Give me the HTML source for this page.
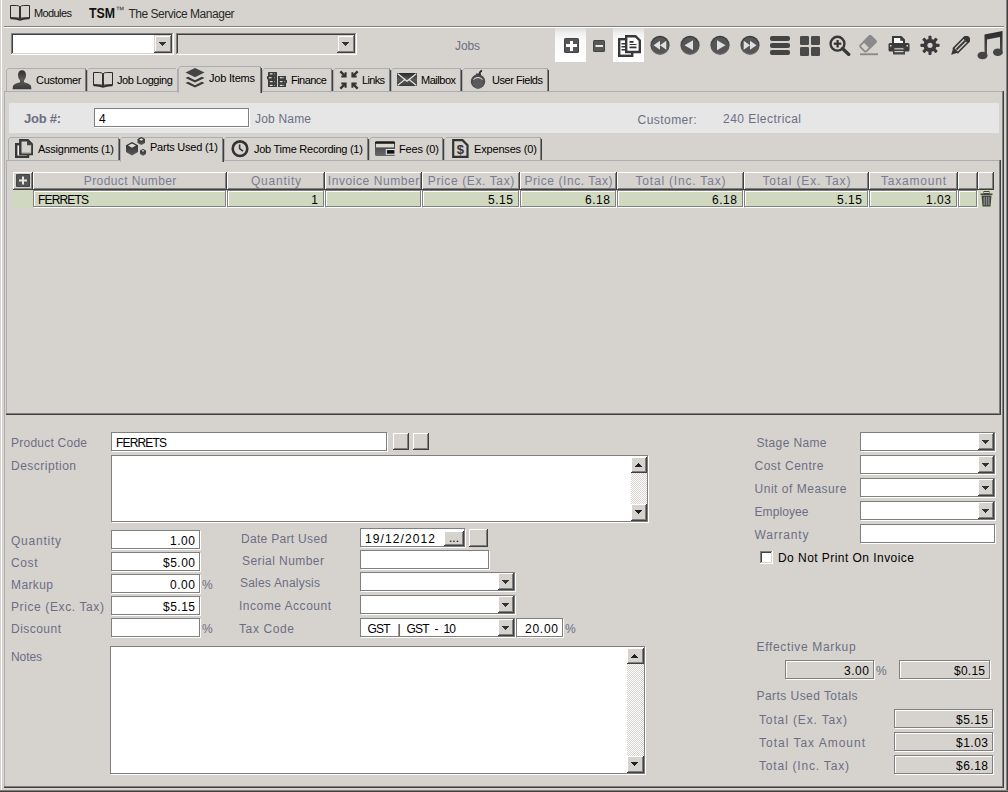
<!DOCTYPE html>
<html><head><meta charset="utf-8">
<style>
*{margin:0;padding:0;box-sizing:border-box}
html,body{width:1008px;height:792px;overflow:hidden;background:#d6d3ce}
body{position:relative;font-family:"Liberation Sans",sans-serif;font-size:12px;color:#000}
.a{position:absolute}
.t{position:absolute;white-space:nowrap}
</style></head><body>
<div class="a" style="left:1px;top:0px;width:1px;height:792px;background:#fff"></div>
<div class="a" style="left:1006px;top:0px;width:1px;height:792px;background:#808080"></div>
<div class="a" style="left:1007px;top:0px;width:1px;height:792px;background:#404040"></div>
<div class="a" style="left:0px;top:790px;width:1008px;height:1px;background:#808080"></div>
<div class="a" style="left:0px;top:791px;width:1008px;height:1px;background:#404040"></div>
<div class="a" style="left:4px;top:26px;width:1000px;height:1px;background:#808080"></div>
<div class="a" style="left:4px;top:27px;width:1000px;height:1px;background:#fff"></div>
<svg class="a" style="left:10px;top:5px;" width="20" height="16" viewBox="0 0 20 16"><path d="M0.5 0.5H6.5Q9 0.5 10 2Q11 0.5 13.5 0.5H19.5V13H0.5Z" fill="none" stroke="#2b2b2b" stroke-width="1"/>
<path d="M0.5 12.3Q6 12 10 14Q14 12 19.5 12.3V14.3Q14 14 10 15.8Q6 14 0.5 14.3Z" fill="#2b2b2b"/>
<rect x="9" y="2" width="2" height="13" fill="#333"/></svg>
<div class="t" style="left:34.0px;top:8px;font-size:11px;line-height:11px;color:#111;letter-spacing:-0.60px;">Modules</div>
<div class="t" style="left:88.5px;top:6px;font-size:14px;line-height:14px;color:#111;font-weight:bold;transform:scaleX(0.880);transform-origin:0 0;">TSM</div>
<div class="t" style="left:115.5px;top:6px;font-size:9px;line-height:9px;color:#333;">™</div>
<div class="t" style="left:128.5px;top:8px;font-size:12px;line-height:12px;color:#2a2a2a;letter-spacing:-0.48px;">The Service Manager</div>
<div class="a" style="left:11px;top:33px;width:163px;height:22px;background:#fff;box-shadow:inset -1px -1px #fff, inset 1px 1px #808080, inset -2px -2px #d6d3ce, inset 2px 2px #404040"></div>
<div class="a" style="left:154px;top:35px;width:18px;height:18px;background:#d6d3ce;box-shadow:inset -1px -1px #404040, inset 1px 1px #d6d3ce, inset -2px -2px #808080, inset 2px 2px #fff"></div>
<svg class="a" style="left:159px;top:42px" width="7" height="4" shape-rendering="crispEdges"><path d="M0 0h7v1h-7zM1 1h5v1h-5zM2 2h3v1h-3zM3 3h1v1h-1z" fill="#333"/></svg>
<div class="a" style="left:176px;top:33px;width:181px;height:22px;background:#d6d3ce;box-shadow:inset -1px -1px #fff, inset 1px 1px #808080, inset -2px -2px #d6d3ce, inset 2px 2px #404040"></div>
<div class="a" style="left:337px;top:35px;width:18px;height:18px;background:#d6d3ce;box-shadow:inset -1px -1px #404040, inset 1px 1px #d6d3ce, inset -2px -2px #808080, inset 2px 2px #fff"></div>
<svg class="a" style="left:342px;top:42px" width="7" height="4" shape-rendering="crispEdges"><path d="M0 0h7v1h-7zM1 1h5v1h-5zM2 2h3v1h-3zM3 3h1v1h-1z" fill="#333"/></svg>
<div class="t" style="left:455.0px;top:40px;font-size:12px;line-height:12px;color:#6c6e84;letter-spacing:-0.11px;">Jobs</div>
<div class="a" style="left:6px;top:70px;width:1px;height:22px;background:#adadb4"></div>
<div class="a" style="left:7px;top:69px;width:1px;height:1px;background:#adadb4"></div>
<div class="a" style="left:8px;top:68px;width:77px;height:1px;background:#adadb4"></div>
<div class="a" style="left:85px;top:69px;width:1px;height:23px;background:#808080"></div>
<div class="a" style="left:86px;top:70px;width:1px;height:22px;background:#404040"></div>
<div class="a" style="left:85px;top:68px;width:1px;height:1px;background:#adadb4"></div>
<div class="a" style="left:87px;top:70px;width:1px;height:22px;background:#adadb4"></div>
<div class="a" style="left:88px;top:69px;width:1px;height:1px;background:#adadb4"></div>
<div class="a" style="left:89px;top:68px;width:87px;height:1px;background:#adadb4"></div>
<div class="a" style="left:177px;top:69px;width:1px;height:23px;background:#adadb4"></div>
<div class="a" style="left:262px;top:70px;width:1px;height:22px;background:#adadb4"></div>
<div class="a" style="left:263px;top:69px;width:1px;height:1px;background:#adadb4"></div>
<div class="a" style="left:264px;top:68px;width:67px;height:1px;background:#adadb4"></div>
<div class="a" style="left:331px;top:69px;width:1px;height:23px;background:#808080"></div>
<div class="a" style="left:332px;top:70px;width:1px;height:22px;background:#404040"></div>
<div class="a" style="left:331px;top:68px;width:1px;height:1px;background:#adadb4"></div>
<div class="a" style="left:333px;top:70px;width:1px;height:22px;background:#adadb4"></div>
<div class="a" style="left:334px;top:69px;width:1px;height:1px;background:#adadb4"></div>
<div class="a" style="left:335px;top:68px;width:54px;height:1px;background:#adadb4"></div>
<div class="a" style="left:389px;top:69px;width:1px;height:23px;background:#808080"></div>
<div class="a" style="left:390px;top:70px;width:1px;height:22px;background:#404040"></div>
<div class="a" style="left:389px;top:68px;width:1px;height:1px;background:#adadb4"></div>
<div class="a" style="left:391px;top:70px;width:1px;height:22px;background:#adadb4"></div>
<div class="a" style="left:392px;top:69px;width:1px;height:1px;background:#adadb4"></div>
<div class="a" style="left:393px;top:68px;width:67px;height:1px;background:#adadb4"></div>
<div class="a" style="left:460px;top:69px;width:1px;height:23px;background:#808080"></div>
<div class="a" style="left:461px;top:70px;width:1px;height:22px;background:#404040"></div>
<div class="a" style="left:460px;top:68px;width:1px;height:1px;background:#adadb4"></div>
<div class="a" style="left:462px;top:70px;width:1px;height:22px;background:#adadb4"></div>
<div class="a" style="left:463px;top:69px;width:1px;height:1px;background:#adadb4"></div>
<div class="a" style="left:464px;top:68px;width:83px;height:1px;background:#adadb4"></div>
<div class="a" style="left:547px;top:69px;width:1px;height:23px;background:#808080"></div>
<div class="a" style="left:548px;top:70px;width:1px;height:22px;background:#404040"></div>
<div class="a" style="left:547px;top:68px;width:1px;height:1px;background:#adadb4"></div>
<div class="a" style="left:4px;top:91px;width:174px;height:1px;background:#adadb4"></div>
<div class="a" style="left:261px;top:91px;width:742px;height:1px;background:#adadb4"></div>
<div class="a" style="left:4px;top:91px;width:1px;height:697px;background:#adadb4"></div>
<div class="a" style="left:1002px;top:91px;width:1px;height:696px;background:#808080"></div>
<div class="a" style="left:1003px;top:91px;width:1px;height:697px;background:#404040"></div>
<div class="a" style="left:4px;top:786px;width:999px;height:1px;background:#808080"></div>
<div class="a" style="left:4px;top:787px;width:1000px;height:1px;background:#404040"></div>
<div class="a" style="left:178px;top:68px;width:1px;height:25px;background:#adadb4"></div>
<div class="a" style="left:179px;top:67px;width:1px;height:1px;background:#adadb4"></div>
<div class="a" style="left:180px;top:66px;width:80px;height:1px;background:#adadb4"></div>
<div class="a" style="left:260px;top:67px;width:1px;height:26px;background:#808080"></div>
<div class="a" style="left:261px;top:68px;width:1px;height:25px;background:#404040"></div>
<div class="a" style="left:260px;top:66px;width:1px;height:1px;background:#adadb4"></div>
<div class="t" style="left:36.0px;top:75px;font-size:11px;line-height:11px;color:#000;letter-spacing:-0.31px;">Customer</div>
<div class="t" style="left:117.0px;top:75px;font-size:11px;line-height:11px;color:#000;letter-spacing:-0.40px;">Job Logging</div>
<div class="t" style="left:209.0px;top:73px;font-size:11px;line-height:11px;color:#000;letter-spacing:-0.21px;">Job Items</div>
<div class="t" style="left:291.0px;top:75px;font-size:11px;line-height:11px;color:#000;letter-spacing:-0.53px;">Finance</div>
<div class="t" style="left:362.0px;top:75px;font-size:11px;line-height:11px;color:#000;letter-spacing:-0.67px;">Links</div>
<div class="t" style="left:421.0px;top:75px;font-size:11px;line-height:11px;color:#000;letter-spacing:-0.48px;">Mailbox</div>
<div class="t" style="left:492.0px;top:75px;font-size:11px;line-height:11px;color:#000;letter-spacing:-0.46px;">User Fields</div>
<div class="a" style="left:9px;top:103px;width:990px;height:30px;background:#e6e6e6"></div>
<div class="t" style="left:24.0px;top:112px;font-size:13px;line-height:13px;color:#6c6e84;letter-spacing:-0.26px;font-weight:bold;">Job #:</div>
<div class="a" style="left:94px;top:108px;width:155px;height:19px;background:#fff;border:1px solid #7f7f7f;box-shadow:1px 1px 0 #fff"></div>
<div class="t" style="left:99.0px;top:113px;font-size:12px;line-height:12px;color:#000;">4</div>
<div class="t" style="left:255.0px;top:113px;font-size:12px;line-height:12px;color:#6c6e84;letter-spacing:0.19px;">Job Name</div>
<div class="t" style="left:637.5px;top:114px;font-size:12px;line-height:12px;color:#6c6e84;letter-spacing:0.46px;">Customer:</div>
<div class="t" style="left:723.0px;top:113px;font-size:12px;line-height:12px;color:#6c6e84;letter-spacing:0.46px;">240 Electrical</div>
<div class="a" style="left:8px;top:139px;width:1px;height:22px;background:#adadb4"></div>
<div class="a" style="left:9px;top:138px;width:1px;height:1px;background:#adadb4"></div>
<div class="a" style="left:10px;top:137px;width:108px;height:1px;background:#adadb4"></div>
<div class="a" style="left:118px;top:138px;width:1px;height:23px;background:#808080"></div>
<div class="a" style="left:119px;top:139px;width:1px;height:22px;background:#404040"></div>
<div class="a" style="left:118px;top:137px;width:1px;height:1px;background:#adadb4"></div>
<div class="a" style="left:224px;top:139px;width:1px;height:22px;background:#adadb4"></div>
<div class="a" style="left:225px;top:138px;width:1px;height:1px;background:#adadb4"></div>
<div class="a" style="left:226px;top:137px;width:141px;height:1px;background:#adadb4"></div>
<div class="a" style="left:367px;top:138px;width:1px;height:23px;background:#808080"></div>
<div class="a" style="left:368px;top:139px;width:1px;height:22px;background:#404040"></div>
<div class="a" style="left:367px;top:137px;width:1px;height:1px;background:#adadb4"></div>
<div class="a" style="left:369px;top:139px;width:1px;height:22px;background:#adadb4"></div>
<div class="a" style="left:370px;top:138px;width:1px;height:1px;background:#adadb4"></div>
<div class="a" style="left:371px;top:137px;width:71px;height:1px;background:#adadb4"></div>
<div class="a" style="left:442px;top:138px;width:1px;height:23px;background:#808080"></div>
<div class="a" style="left:443px;top:139px;width:1px;height:22px;background:#404040"></div>
<div class="a" style="left:442px;top:137px;width:1px;height:1px;background:#adadb4"></div>
<div class="a" style="left:444px;top:139px;width:1px;height:22px;background:#adadb4"></div>
<div class="a" style="left:445px;top:138px;width:1px;height:1px;background:#adadb4"></div>
<div class="a" style="left:446px;top:137px;width:94px;height:1px;background:#adadb4"></div>
<div class="a" style="left:540px;top:138px;width:1px;height:23px;background:#808080"></div>
<div class="a" style="left:541px;top:139px;width:1px;height:22px;background:#404040"></div>
<div class="a" style="left:540px;top:137px;width:1px;height:1px;background:#adadb4"></div>
<div class="a" style="left:6px;top:160px;width:114px;height:1px;background:#adadb4"></div>
<div class="a" style="left:223px;top:160px;width:778px;height:1px;background:#adadb4"></div>
<div class="a" style="left:6px;top:160px;width:1px;height:255px;background:#adadb4"></div>
<div class="a" style="left:999px;top:160px;width:1px;height:254px;background:#808080"></div>
<div class="a" style="left:1000px;top:160px;width:1px;height:255px;background:#404040"></div>
<div class="a" style="left:6px;top:413px;width:994px;height:1px;background:#808080"></div>
<div class="a" style="left:6px;top:414px;width:995px;height:1px;background:#404040"></div>
<div class="a" style="left:120px;top:139px;width:1px;height:23px;background:#adadb4"></div>
<div class="a" style="left:121px;top:138px;width:1px;height:1px;background:#adadb4"></div>
<div class="a" style="left:122px;top:137px;width:100px;height:1px;background:#adadb4"></div>
<div class="a" style="left:222px;top:138px;width:1px;height:24px;background:#808080"></div>
<div class="a" style="left:223px;top:139px;width:1px;height:23px;background:#404040"></div>
<div class="a" style="left:222px;top:137px;width:1px;height:1px;background:#adadb4"></div>
<div class="t" style="left:38.0px;top:144px;font-size:11px;line-height:11px;color:#000;letter-spacing:-0.25px;">Assignments (1)</div>
<div class="t" style="left:150.0px;top:142px;font-size:11px;line-height:11px;color:#000;letter-spacing:-0.23px;">Parts Used (1)</div>
<div class="t" style="left:254.0px;top:144px;font-size:11px;line-height:11px;color:#000;letter-spacing:-0.26px;">Job Time Recording (1)</div>
<div class="t" style="left:399.0px;top:144px;font-size:11px;line-height:11px;color:#000;letter-spacing:-0.14px;">Fees (0)</div>
<div class="t" style="left:474.0px;top:144px;font-size:11px;line-height:11px;color:#000;letter-spacing:-0.17px;">Expenses (0)</div>
<svg class="a" style="left:12px;top:70px;" width="20" height="20" viewBox="0 0 20 20"><defs><linearGradient id="pg" x1="0" y1="0" x2="0" y2="1"><stop offset="0" stop-color="#2e2e2e"/><stop offset="0.5" stop-color="#5a5a5a"/><stop offset="1" stop-color="#3a3a3a"/></linearGradient></defs>
<path d="M10 0.3C7.6 0.3 6 2.2 6 5C6 7.5 7 9.3 8 10.3V12.3Q2.5 13.6 1 15.8L0.6 19.3H19.4L19 15.8Q17.5 13.6 12 12.3V10.3C13 9.3 14 7.5 14 5C14 2.2 12.4 0.3 10 0.3Z" fill="url(#pg)"/></svg>
<svg class="a" style="left:93px;top:72px;" width="20" height="16" viewBox="0 0 20 16"><path d="M0.5 0.5H6.5Q9 0.5 10 2Q11 0.5 13.5 0.5H19.5V13H0.5Z" fill="none" stroke="#2b2b2b" stroke-width="1"/>
<path d="M0.5 12.3Q6 12 10 14Q14 12 19.5 12.3V14.3Q14 14 10 15.8Q6 14 0.5 14.3Z" fill="#2b2b2b"/>
<rect x="9" y="2" width="2" height="13" fill="#333"/></svg>
<svg class="a" style="left:185px;top:67px;" width="20" height="21" viewBox="0 0 20 21"><path d="M0.5 5.6L10 1L19.5 5.6L10 10.2Z" fill="#444"/>
<path d="M0.5 11L3.2 9.7L10 13.2L16.8 9.7L19.5 11L10 15.6Z" fill="#3a3a3a"/>
<path d="M0.5 16L3.2 14.7L10 18.2L16.8 14.7L19.5 16L10 20.6Z" fill="#3a3a3a"/></svg>
<svg class="a" style="left:267px;top:72px;" width="20" height="15" viewBox="0 0 20 15"><rect x="1" y="0.5" width="9" height="14.3" fill="#4a4a4a"/><rect x="11" y="4.2" width="8" height="10.6" fill="#4a4a4a"/><rect x="1" y="0" width="9" height="3.6" rx="0.8" fill="#3a3a3a"/><rect x="2.8" y="1.3" width="2.8" height="1.1" fill="#f0f0f0"/><rect x="7" y="1.3" width="1.2" height="1.1" fill="#9a9a9a"/><rect x="0" y="3.9" width="10" height="3.6" rx="0.8" fill="#3a3a3a"/><rect x="1.8" y="5.2" width="2.8" height="1.1" fill="#f0f0f0"/><rect x="7" y="5.2" width="1.2" height="1.1" fill="#9a9a9a"/><rect x="1" y="7.8" width="9" height="3.4" rx="0.8" fill="#3a3a3a"/><rect x="2.8" y="9.1" width="2.8" height="1.1" fill="#f0f0f0"/><rect x="7" y="9.1" width="1.2" height="1.1" fill="#9a9a9a"/><rect x="1" y="11.5" width="9" height="3.5" rx="0.8" fill="#3a3a3a"/><rect x="2.8" y="12.8" width="2.8" height="1.1" fill="#f0f0f0"/><rect x="7" y="12.8" width="1.2" height="1.1" fill="#9a9a9a"/><rect x="11" y="3.9" width="8" height="3.6" rx="0.8" fill="#3a3a3a"/><rect x="12.8" y="5.2" width="2.8" height="1.1" fill="#f0f0f0"/><rect x="16" y="5.2" width="1.2" height="1.1" fill="#9a9a9a"/><rect x="11" y="7.8" width="9" height="3.4" rx="0.8" fill="#3a3a3a"/><rect x="12.8" y="9.1" width="2.8" height="1.1" fill="#f0f0f0"/><rect x="17" y="9.1" width="1.2" height="1.1" fill="#9a9a9a"/><rect x="11" y="11.5" width="8" height="3.5" rx="0.8" fill="#3a3a3a"/><rect x="12.8" y="12.8" width="2.8" height="1.1" fill="#f0f0f0"/><rect x="16" y="12.8" width="1.2" height="1.1" fill="#9a9a9a"/></svg>
<svg class="a" style="left:339px;top:70px;" width="20" height="20" viewBox="0 0 20 20"><g fill="#333"><path d="M0.5 2.2L2.2 0.5L5.6 3.9L5.6 2.3L7.6 2.3L7.6 7.6L2.3 7.6L2.3 5.6L3.9 5.6Z"/>
<path transform="translate(20 0) scale(-1 1)" d="M0.5 2.2L2.2 0.5L5.6 3.9L5.6 2.3L7.6 2.3L7.6 7.6L2.3 7.6L2.3 5.6L3.9 5.6Z"/>
<path transform="translate(0 20) scale(1 -1)" d="M0.5 2.2L2.2 0.5L5.6 3.9L5.6 2.3L7.6 2.3L7.6 7.6L2.3 7.6L2.3 5.6L3.9 5.6Z"/>
<path transform="translate(20 20) scale(-1 -1)" d="M0.5 2.2L2.2 0.5L5.6 3.9L5.6 2.3L7.6 2.3L7.6 7.6L2.3 7.6L2.3 5.6L3.9 5.6Z"/></g></svg>
<svg class="a" style="left:397px;top:73px;" width="20" height="13" viewBox="0 0 20 13"><defs><linearGradient id="eg" x1="0" y1="0" x2="0" y2="1"><stop offset="0" stop-color="#2a2a2a"/><stop offset="0.5" stop-color="#5a5a5a"/><stop offset="1" stop-color="#3a3a3a"/></linearGradient></defs>
<rect x="0" y="0" width="20" height="13" rx="0.8" fill="url(#eg)"/>
<path d="M0.8 0.8L10 8.3L19.2 0.8M0.8 12.2L7.8 6.6M19.2 12.2L12.2 6.6" stroke="#eeeae6" stroke-width="1.2" fill="none"/></svg>
<svg class="a" style="left:470px;top:69px;" width="16" height="21" viewBox="0 0 16 21"><path d="M9.5 5.5Q9.5 2.5 12 1.5" stroke="#222" stroke-width="1.6" fill="none"/>
<rect x="6" y="4.5" width="5" height="3" fill="#3a3a3a"/>
<circle cx="8" cy="12.5" r="7.2" fill="#4a4a4a"/>
<circle cx="8" cy="14" r="5.5" fill="#5a5a5a"/>
<path d="M3.5 10.5Q8 6.5 12.5 10.5" stroke="#eee" stroke-width="1" fill="none"/></svg>
<svg class="a" style="left:15px;top:139px;" width="18" height="19" viewBox="0 0 18 19"><rect x="1.2" y="5.2" width="11.8" height="12.6" fill="#f4f4f4" stroke="#383838" stroke-width="2.4"/>
<path d="M5.3 1.2H12.8L17 5.4V15H5.3Z" fill="#d6d3ce" stroke="#383838" stroke-width="2.4"/>
<path d="M12 1V6.2H17.2Z" fill="#444"/>
<path d="M6.5 14.3H15.8V5.8" fill="none" stroke="#f4f4f4" stroke-width="0.8" opacity="0.6"/></svg>
<svg class="a" style="left:126px;top:137px;" width="21" height="19" viewBox="0 0 21 19"><defs><linearGradient id="cg" x1="0" y1="0" x2="0" y2="1"><stop offset="0" stop-color="#2a2a2a"/><stop offset="1" stop-color="#5a5a5a"/></linearGradient></defs>
<path d="M6 5L12 8.3V15L6 18.5L0 15V8.3Z" fill="url(#cg)"/>
<path d="M6 6.6L10 8.6L6 10.8L2 8.6Z" fill="#e0dcd8"/>
<path d="M15.3 0L19 2V6L15.3 8L11.5 6V2Z" fill="url(#cg)"/>
<path d="M15.3 1.3L17.5 2.4L15.3 3.7L13.1 2.4Z" fill="#e0dcd8"/>
<path d="M17 12L20 13.6V17L17 18.7L14 17V13.6Z" fill="url(#cg)"/>
<path d="M17 13L18.6 13.8L17 14.8L15.4 13.8Z" fill="#e0dcd8"/></svg>
<svg class="a" style="left:231px;top:140px;" width="18" height="18" viewBox="0 0 18 18"><circle cx="9" cy="8.7" r="7.3" fill="none" stroke="#333" stroke-width="2.6"/>
<path d="M8.6 4.5V8.6L12 11.2" fill="none" stroke="#333" stroke-width="1.5"/></svg>
<svg class="a" style="left:375px;top:141px;" width="20" height="15" viewBox="0 0 20 15"><defs><linearGradient id="fg" x1="0" y1="0" x2="0" y2="1"><stop offset="0" stop-color="#3a3a3a"/><stop offset="1" stop-color="#6a6a6a"/></linearGradient></defs>
<rect x="0" y="0.5" width="20" height="14.5" rx="1.5" fill="url(#fg)"/>
<rect x="0" y="0.5" width="20" height="2.2" rx="1" fill="#181818"/>
<rect x="1" y="2.8" width="18" height="3.6" fill="#dcd8d2"/>
<rect x="11.3" y="8.6" width="8.7" height="4.6" fill="#111" stroke="#f4f4f4" stroke-width="1"/></svg>
<svg class="a" style="left:452px;top:139px;" width="17" height="19" viewBox="0 0 17 19"><path d="M1.2 1.2H10.5L15.5 6.2V17.8H1.2Z" fill="#d6d3ce" stroke="#333" stroke-width="2.2"/>
<text x="8.3" y="15" font-family="Liberation Sans" font-weight="bold" font-size="13" text-anchor="middle" fill="#333">$</text></svg>
<div class="a" style="left:13px;top:172px;width:20px;height:18px;background:#d6d3ce;box-shadow:inset -1px -1px #404040, inset 1px 1px #fff, inset -2px -2px #808080"></div>
<div class="a" style="left:33px;top:172px;width:194px;height:18px;background:#d6d3ce;box-shadow:inset -1px -1px #404040, inset 1px 1px #fff, inset -2px -2px #808080"></div>
<div class="a" style="left:227px;top:172px;width:98px;height:18px;background:#d6d3ce;box-shadow:inset -1px -1px #404040, inset 1px 1px #fff, inset -2px -2px #808080"></div>
<div class="a" style="left:325px;top:172px;width:97px;height:18px;background:#d6d3ce;box-shadow:inset -1px -1px #404040, inset 1px 1px #fff, inset -2px -2px #808080"></div>
<div class="a" style="left:422px;top:172px;width:98px;height:18px;background:#d6d3ce;box-shadow:inset -1px -1px #404040, inset 1px 1px #fff, inset -2px -2px #808080"></div>
<div class="a" style="left:520px;top:172px;width:97px;height:18px;background:#d6d3ce;box-shadow:inset -1px -1px #404040, inset 1px 1px #fff, inset -2px -2px #808080"></div>
<div class="a" style="left:617px;top:172px;width:127px;height:18px;background:#d6d3ce;box-shadow:inset -1px -1px #404040, inset 1px 1px #fff, inset -2px -2px #808080"></div>
<div class="a" style="left:744px;top:172px;width:125px;height:18px;background:#d6d3ce;box-shadow:inset -1px -1px #404040, inset 1px 1px #fff, inset -2px -2px #808080"></div>
<div class="a" style="left:869px;top:172px;width:89px;height:18px;background:#d6d3ce;box-shadow:inset -1px -1px #404040, inset 1px 1px #fff, inset -2px -2px #808080"></div>
<div class="a" style="left:958px;top:172px;width:20px;height:18px;background:#d6d3ce;box-shadow:inset -1px -1px #404040, inset 1px 1px #fff, inset -2px -2px #808080"></div>
<div class="a" style="left:978px;top:172px;width:16px;height:18px;background:#d6d3ce;box-shadow:inset -1px -1px #404040, inset 1px 1px #fff, inset -2px -2px #808080"></div>
<svg class="a" style="left:16px;top:174px;" width="14" height="13" viewBox="0 0 14 13"><rect x="0" y="0" width="14" height="13" rx="1" fill="#444"/><rect x="1" y="1" width="12" height="11" fill="#555"/>
<rect x="6" y="2.5" width="2" height="8" fill="#e6e6e6"/><rect x="3" y="5.5" width="8" height="2" fill="#e6e6e6"/></svg>
<div class="t" style="left:83.8px;top:175px;font-size:12px;line-height:12px;color:#7a7c92;letter-spacing:0.40px;">Product Number</div>
<div class="t" style="left:251.0px;top:175px;font-size:12px;line-height:12px;color:#7a7c92;letter-spacing:0.76px;">Quantity</div>
<div class="t" style="left:327.8px;top:175px;font-size:12px;line-height:12px;color:#7a7c92;letter-spacing:0.57px;">Invoice Number</div>
<div class="t" style="left:427.8px;top:175px;font-size:12px;line-height:12px;color:#7a7c92;letter-spacing:0.62px;">Price (Ex. Tax)</div>
<div class="t" style="left:524.5px;top:175px;font-size:12px;line-height:12px;color:#7a7c92;letter-spacing:0.55px;">Price (Inc. Tax)</div>
<div class="t" style="left:635.5px;top:175px;font-size:12px;line-height:12px;color:#7a7c92;letter-spacing:0.81px;">Total (Inc. Tax)</div>
<div class="t" style="left:762.5px;top:175px;font-size:12px;line-height:12px;color:#7a7c92;letter-spacing:0.87px;">Total (Ex. Tax)</div>
<div class="t" style="left:881.0px;top:175px;font-size:12px;line-height:12px;color:#7a7c92;letter-spacing:0.79px;">Taxamount</div>
<div class="a" style="left:13px;top:190px;width:20px;height:18px;background:#d0d8c0"></div>
<div class="a" style="left:33px;top:190px;width:193px;height:17px;background:#d0d8c0;border-right:1px solid #808080;border-bottom:1px solid #808080;box-shadow:1px 1px 0 #fff, inset 1px 1px #808080, inset 2px 2px #fff"></div>
<div class="a" style="left:227px;top:190px;width:97px;height:17px;background:#d0d8c0;border-right:1px solid #808080;border-bottom:1px solid #808080;box-shadow:1px 1px 0 #fff, inset 1px 1px #808080, inset 2px 2px #fff"></div>
<div class="a" style="left:325px;top:190px;width:96px;height:17px;background:#d0d8c0;border-right:1px solid #808080;border-bottom:1px solid #808080;box-shadow:1px 1px 0 #fff, inset 1px 1px #808080, inset 2px 2px #fff"></div>
<div class="a" style="left:422px;top:190px;width:97px;height:17px;background:#d0d8c0;border-right:1px solid #808080;border-bottom:1px solid #808080;box-shadow:1px 1px 0 #fff, inset 1px 1px #808080, inset 2px 2px #fff"></div>
<div class="a" style="left:520px;top:190px;width:96px;height:17px;background:#d0d8c0;border-right:1px solid #808080;border-bottom:1px solid #808080;box-shadow:1px 1px 0 #fff, inset 1px 1px #808080, inset 2px 2px #fff"></div>
<div class="a" style="left:617px;top:190px;width:126px;height:17px;background:#d0d8c0;border-right:1px solid #808080;border-bottom:1px solid #808080;box-shadow:1px 1px 0 #fff, inset 1px 1px #808080, inset 2px 2px #fff"></div>
<div class="a" style="left:744px;top:190px;width:124px;height:17px;background:#d0d8c0;border-right:1px solid #808080;border-bottom:1px solid #808080;box-shadow:1px 1px 0 #fff, inset 1px 1px #808080, inset 2px 2px #fff"></div>
<div class="a" style="left:869px;top:190px;width:88px;height:17px;background:#d0d8c0;border-right:1px solid #808080;border-bottom:1px solid #808080;box-shadow:1px 1px 0 #fff, inset 1px 1px #808080, inset 2px 2px #fff"></div>
<div class="a" style="left:958px;top:190px;width:19px;height:17px;background:#d0d8c0;border-right:1px solid #808080;border-bottom:1px solid #808080;box-shadow:1px 1px 0 #fff, inset 1px 1px #808080, inset 2px 2px #fff"></div>
<div class="a" style="left:978px;top:190px;width:16px;height:18px;background:#d0d8c0"></div>
<div class="t" style="left:38.0px;top:194px;font-size:12px;line-height:12px;color:#000;letter-spacing:-0.83px;">FERRETS</div>
<div class="t" style="left:311.3px;top:194px;font-size:12px;line-height:12px;color:#000;">1</div>
<div class="t" style="left:488.0px;top:194px;font-size:12px;line-height:12px;color:#000;letter-spacing:0.55px;">5.15</div>
<div class="t" style="left:585.0px;top:194px;font-size:12px;line-height:12px;color:#000;letter-spacing:0.55px;">6.18</div>
<div class="t" style="left:712.0px;top:194px;font-size:12px;line-height:12px;color:#000;letter-spacing:0.55px;">6.18</div>
<div class="t" style="left:837.0px;top:194px;font-size:12px;line-height:12px;color:#000;letter-spacing:0.55px;">5.15</div>
<div class="t" style="left:926.0px;top:194px;font-size:12px;line-height:12px;color:#000;letter-spacing:0.55px;">1.03</div>
<svg class="a" style="left:980px;top:191px;" width="13" height="16" viewBox="0 0 13 16"><rect x="4" y="0.5" width="5" height="2" fill="none" stroke="#444" stroke-width="1"/>
<rect x="0.5" y="2.5" width="12" height="1.5" fill="#444"/>
<path d="M1.5 4.5H11.5L10.5 15.5H2.5Z" fill="#444"/>
<rect x="3.6" y="5.8" width="1.3" height="8.4" fill="#8a8a8a"/><rect x="5.9" y="5.8" width="1.3" height="8.4" fill="#8a8a8a"/><rect x="8.2" y="5.8" width="1.3" height="8.4" fill="#8a8a8a"/></svg>
<div class="a" style="left:555px;top:28px;width:31px;height:34px;background:linear-gradient(#dcdcdc 0px,#efefef 5px,#fafafa 12px,#fff 34px)"></div>
<div class="a" style="left:613px;top:28px;width:31px;height:34px;background:linear-gradient(#dcdcdc 0px,#efefef 5px,#fafafa 12px,#fff 34px)"></div>
<svg class="a" style="left:564px;top:38px;" width="15" height="15" viewBox="0 0 15 15"><rect x="0" y="0" width="15" height="15" rx="1.5" fill="#444"/><rect x="1" y="1" width="13" height="13" fill="#555"/>
<rect x="6" y="3" width="3" height="10" fill="#fff"/><rect x="2" y="6" width="11" height="3" fill="#fff"/></svg>
<svg class="a" style="left:593px;top:40px;" width="12" height="12" viewBox="0 0 12 12"><rect x="0" y="0" width="12" height="12" rx="1.5" fill="#444"/><rect x="1" y="1" width="10" height="10" fill="#585858"/>
<rect x="2.5" y="5" width="7.5" height="2" fill="#e8e8e8"/></svg>
<svg class="a" style="left:618px;top:35px;" width="23" height="22" viewBox="0 0 23 22"><rect x="1.2" y="4.2" width="13" height="16.6" fill="#fff" stroke="#383838" stroke-width="2.4"/>
<rect x="3.5" y="8" width="3.5" height="1.5" fill="#333"/><rect x="3.5" y="11" width="3.5" height="1.5" fill="#333"/><rect x="3.5" y="14" width="3.5" height="1.5" fill="#333"/>
<path d="M8.2 1.2H17.5L21.8 5.5V17H8.2Z" fill="#fff" stroke="#383838" stroke-width="2.4"/>
<rect x="11.5" y="6" width="4" height="1.8" fill="#333"/><rect x="11.5" y="9" width="7" height="1" fill="#333"/><rect x="11.5" y="11.5" width="7" height="1.8" fill="#333"/></svg>
<svg class="a" style="left:650px;top:35px;" width="20" height="20" viewBox="0 0 20 20"><defs><linearGradient id="c660" x1="0" y1="0" x2="0" y2="1"><stop offset="0" stop-color="#333"/><stop offset="1" stop-color="#6a6a6a"/></linearGradient></defs>
<circle cx="10" cy="10.3" r="9.6" fill="url(#c660)"/><circle cx="10" cy="10.3" r="8.2" fill="#555"/><path d="M3.5 10.3L10 5.8V14.8Z M10 10.3L16.3 5.8V14.8Z" fill="#e0e0e0"/></svg>
<svg class="a" style="left:680px;top:35px;" width="20" height="20" viewBox="0 0 20 20"><defs><linearGradient id="c690" x1="0" y1="0" x2="0" y2="1"><stop offset="0" stop-color="#333"/><stop offset="1" stop-color="#6a6a6a"/></linearGradient></defs>
<circle cx="10" cy="10.3" r="9.6" fill="url(#c690)"/><circle cx="10" cy="10.3" r="8.2" fill="#555"/><path d="M4.5 10.3L13 5.3V15.3Z" fill="#e0e0e0"/></svg>
<svg class="a" style="left:710px;top:35px;" width="20" height="20" viewBox="0 0 20 20"><defs><linearGradient id="c720" x1="0" y1="0" x2="0" y2="1"><stop offset="0" stop-color="#333"/><stop offset="1" stop-color="#6a6a6a"/></linearGradient></defs>
<circle cx="10" cy="10.3" r="9.6" fill="url(#c720)"/><circle cx="10" cy="10.3" r="8.2" fill="#555"/><path d="M15.5 10.3L7 5.3V15.3Z" fill="#e0e0e0"/></svg>
<svg class="a" style="left:740px;top:35px;" width="20" height="20" viewBox="0 0 20 20"><defs><linearGradient id="c750" x1="0" y1="0" x2="0" y2="1"><stop offset="0" stop-color="#333"/><stop offset="1" stop-color="#6a6a6a"/></linearGradient></defs>
<circle cx="10" cy="10.3" r="9.6" fill="url(#c750)"/><circle cx="10" cy="10.3" r="8.2" fill="#555"/><path d="M16.5 10.3L10 5.8V14.8Z M10 10.3L3.7 5.8V14.8Z" fill="#e0e0e0"/></svg>
<svg class="a" style="left:770px;top:36px;" width="20" height="19" viewBox="0 0 20 19"><g fill="#444"><rect x="0" y="0" width="20" height="5" rx="2"/><rect x="0" y="7" width="20" height="5" rx="2"/><rect x="0" y="14" width="20" height="5" rx="2"/></g></svg>
<svg class="a" style="left:800px;top:36px;" width="20" height="20" viewBox="0 0 20 20"><g fill="#4a4a4a"><rect x="0" y="0" width="9" height="9" rx="1.2"/><rect x="11" y="0" width="9" height="9" rx="1.2"/><rect x="0" y="11" width="9" height="9" rx="1.2"/><rect x="11" y="11" width="9" height="9" rx="1.2"/></g></svg>
<svg class="a" style="left:829px;top:35px;" width="22" height="21" viewBox="0 0 22 21"><circle cx="8.5" cy="8.7" r="6.9" fill="none" stroke="#383838" stroke-width="2.4"/>
<path d="M13.5 13.5L19.8 19.5" stroke="#383838" stroke-width="3.2" stroke-linecap="round"/>
<rect x="7.5" y="5" width="2.2" height="7.5" fill="#333"/><rect x="4.8" y="7.6" width="7.5" height="2.2" fill="#333"/></svg>
<svg class="a" style="left:859px;top:35px;" width="20" height="21" viewBox="0 0 20 21"><g transform="rotate(-45 9 9)"><rect x="1.5" y="4.5" width="15" height="8.5" rx="1.5" fill="none" stroke="#8a8a8a" stroke-width="1.8"/><rect x="7" y="3.6" width="10.4" height="10.3" rx="1" fill="#8a8a8a"/></g>
<rect x="1" y="18.3" width="18" height="1.9" fill="#8a8a8a"/></svg>
<svg class="a" style="left:888px;top:36px;" width="22" height="19" viewBox="0 0 22 19"><path d="M5 7V1H13L16 4V7" fill="#fff" stroke="#383838" stroke-width="2"/>
<path d="M13 1V4H16" fill="none" stroke="#383838" stroke-width="1.5"/>
<rect x="0.5" y="7" width="21" height="8.5" rx="1.5" fill="#3c3c3c"/>
<rect x="2" y="9" width="1.5" height="1.5" fill="#ddd"/><rect x="18.5" y="9" width="1.5" height="1.5" fill="#ddd"/>
<rect x="5" y="11" width="12" height="7.5" fill="#444"/><rect x="6.5" y="12.2" width="9" height="1.2" fill="#ccc"/><rect x="6.5" y="15" width="9" height="1.2" fill="#ccc"/></svg>
<svg class="a" style="left:920px;top:35px;" width="20" height="21" viewBox="0 0 20 21"><g fill="#3a3a3a" transform="translate(10 10.3)">
<circle r="6.5"/>
<rect x="-1.6" y="-9.6" width="3.2" height="19.2" rx="0.8"/>
<rect x="-1.6" y="-9.6" width="3.2" height="19.2" rx="0.8" transform="rotate(45)"/>
<rect x="-1.6" y="-9.6" width="3.2" height="19.2" rx="0.8" transform="rotate(90)"/>
<rect x="-1.6" y="-9.6" width="3.2" height="19.2" rx="0.8" transform="rotate(135)"/>
<circle r="2.6" fill="#d6d3ce"/></g></svg>
<svg class="a" style="left:950px;top:36px;" width="20" height="20" viewBox="0 0 20 20"><g transform="rotate(-45 10 10)">
<path d="M-2.5 10L3.5 6.8V13.2Z" fill="#383838"/>
<rect x="3.8" y="6.9" width="14.5" height="6.2" fill="#d6d3ce" stroke="#383838" stroke-width="1.6"/>
<rect x="5" y="9" width="13" height="2" fill="#3a3a3a"/>
<rect x="18" y="6.1" width="4.8" height="7.8" rx="0.5" fill="#383838"/></g></svg>
<svg class="a" style="left:977px;top:30px;" width="27" height="30" viewBox="0 0 27 30"><defs><linearGradient id="mg" x1="0" y1="0" x2="0" y2="1"><stop offset="0" stop-color="#2a2a2a"/><stop offset="1" stop-color="#555"/></linearGradient></defs>
<path d="M7.5 4.5L25.5 1V24H23V7L10 9.5V27H7.5Z" fill="url(#mg)"/>
<ellipse cx="5.5" cy="25.5" rx="5" ry="3.8" fill="#444"/>
<ellipse cx="20.8" cy="22.2" rx="4.8" ry="3.8" fill="#444"/></svg>
<div class="t" style="left:11.0px;top:437px;font-size:12px;line-height:12px;color:#6c6e84;letter-spacing:0.24px;">Product Code</div>
<div class="a" style="left:111px;top:432px;width:276px;height:19px;background:#fff;border:1px solid #7f7f7f;box-shadow:1px 1px 0 #fff"></div>
<div class="t" style="left:116.0px;top:437px;font-size:12px;line-height:12px;color:#000;letter-spacing:-0.83px;">FERRETS</div>
<div class="a" style="left:393px;top:433px;width:16px;height:17px;background:#d6d3ce;box-shadow:inset -1px -1px #404040, inset 1px 1px #fff, inset -2px -2px #808080"></div>
<div class="a" style="left:413px;top:433px;width:16px;height:17px;background:#d6d3ce;box-shadow:inset -1px -1px #404040, inset 1px 1px #fff, inset -2px -2px #808080"></div>
<div class="t" style="left:11.0px;top:460px;font-size:12px;line-height:12px;color:#6c6e84;letter-spacing:0.50px;">Description</div>
<div class="a" style="left:111px;top:455px;width:537px;height:67px;background:#fff;border:1px solid #7f7f7f;box-shadow:1px 1px 0 #fff"></div>
<div class="a" style="left:631px;top:457px;width:16px;height:64px;background:repeating-conic-gradient(#fff 0 25%,#d6d3ce 0 50%) 0 0/2px 2px"></div>
<div class="a" style="left:631px;top:457px;width:16px;height:16px;background:#d6d3ce;box-shadow:inset -1px -1px #404040, inset 1px 1px #fff, inset -2px -2px #808080"></div>
<svg class="a" style="left:635px;top:463px" width="7" height="4" shape-rendering="crispEdges"><path d="M3 0h1v1h-1zM2 1h3v1h-3zM1 2h5v1h-5zM0 3h7v1h-7z" fill="#222"/></svg>
<div class="a" style="left:631px;top:504px;width:16px;height:17px;background:#d6d3ce;box-shadow:inset -1px -1px #404040, inset 1px 1px #fff, inset -2px -2px #808080"></div>
<svg class="a" style="left:635px;top:510px" width="7" height="4" shape-rendering="crispEdges"><path d="M0 0h7v1h-7zM1 1h5v1h-5zM2 2h3v1h-3zM3 3h1v1h-1z" fill="#222"/></svg>
<div class="t" style="left:11.0px;top:535px;font-size:12px;line-height:12px;color:#6c6e84;letter-spacing:0.76px;">Quantity</div>
<div class="a" style="left:111px;top:530px;width:89px;height:19px;background:#fff;border:1px solid #7f7f7f;box-shadow:1px 1px 0 #fff"></div>
<div class="t" style="left:170.0px;top:535px;font-size:12px;line-height:12px;color:#000;letter-spacing:0.55px;">1.00</div>
<div class="t" style="left:11.0px;top:557px;font-size:12px;line-height:12px;color:#6c6e84;letter-spacing:0.61px;">Cost</div>
<div class="a" style="left:111px;top:552px;width:89px;height:19px;background:#fff;border:1px solid #7f7f7f;box-shadow:1px 1px 0 #fff"></div>
<div class="t" style="left:163.0px;top:557px;font-size:12px;line-height:12px;color:#000;letter-spacing:0.50px;">$5.00</div>
<div class="t" style="left:11.0px;top:579px;font-size:12px;line-height:12px;color:#6c6e84;letter-spacing:0.40px;">Markup</div>
<div class="a" style="left:111px;top:574px;width:89px;height:19px;background:#fff;border:1px solid #7f7f7f;box-shadow:1px 1px 0 #fff"></div>
<div class="t" style="left:170.0px;top:579px;font-size:12px;line-height:12px;color:#000;letter-spacing:0.55px;">0.00</div>
<div class="t" style="left:202.0px;top:579px;font-size:12px;line-height:12px;color:#6c6e84;">%</div>
<div class="t" style="left:11.0px;top:601px;font-size:12px;line-height:12px;color:#6c6e84;letter-spacing:0.61px;">Price (Exc. Tax)</div>
<div class="a" style="left:111px;top:596px;width:89px;height:19px;background:#fff;border:1px solid #7f7f7f;box-shadow:1px 1px 0 #fff"></div>
<div class="t" style="left:163.0px;top:601px;font-size:12px;line-height:12px;color:#000;letter-spacing:0.50px;">$5.15</div>
<div class="t" style="left:11.0px;top:623px;font-size:12px;line-height:12px;color:#6c6e84;letter-spacing:0.47px;">Discount</div>
<div class="a" style="left:111px;top:618px;width:89px;height:19px;background:#fff;border:1px solid #7f7f7f;box-shadow:1px 1px 0 #fff"></div>
<div class="t" style="left:202.0px;top:623px;font-size:12px;line-height:12px;color:#6c6e84;">%</div>
<div class="t" style="left:241.0px;top:533px;font-size:12px;line-height:12px;color:#6c6e84;letter-spacing:0.31px;">Date Part Used</div>
<div class="a" style="left:360px;top:528px;width:105px;height:19px;background:#fff;border:1px solid #7f7f7f;box-shadow:1px 1px 0 #fff"></div>
<div class="t" style="left:365.0px;top:533px;font-size:12px;line-height:12px;color:#000;letter-spacing:1.11px;">19/12/2012</div>
<div class="a" style="left:444px;top:531px;width:20px;height:15px;background:#d6d3ce;box-shadow:inset -1px -1px #404040, inset 1px 1px #fff, inset -2px -2px #808080"></div>
<div class="t" style="left:449.0px;top:532px;font-size:12px;line-height:12px;color:#000;letter-spacing:0.01px;">...</div>
<div class="a" style="left:469px;top:529px;width:19px;height:18px;background:#d6d3ce;box-shadow:inset -1px -1px #404040, inset 1px 1px #fff, inset -2px -2px #808080"></div>
<div class="t" style="left:242.0px;top:555px;font-size:12px;line-height:12px;color:#6c6e84;letter-spacing:0.44px;">Serial Number</div>
<div class="a" style="left:360px;top:550px;width:129px;height:19px;background:#fff;border:1px solid #7f7f7f;box-shadow:1px 1px 0 #fff"></div>
<div class="t" style="left:240.0px;top:577px;font-size:12px;line-height:12px;color:#6c6e84;letter-spacing:0.20px;">Sales Analysis</div>
<div class="a" style="left:360px;top:572px;width:155px;height:19px;background:#fff;border:1px solid #7f7f7f;box-shadow:1px 1px 0 #fff"></div>
<div class="a" style="left:498px;top:573px;width:16px;height:17px;background:#d6d3ce;box-shadow:inset -1px -1px #404040, inset 1px 1px #fff, inset -2px -2px #808080"></div>
<svg class="a" style="left:502px;top:580px" width="7" height="4" shape-rendering="crispEdges"><path d="M0 0h7v1h-7zM1 1h5v1h-5zM2 2h3v1h-3zM3 3h1v1h-1z" fill="#333"/></svg>
<div class="t" style="left:239.0px;top:600px;font-size:12px;line-height:12px;color:#6c6e84;letter-spacing:0.51px;">Income Account</div>
<div class="a" style="left:360px;top:595px;width:155px;height:19px;background:#fff;border:1px solid #7f7f7f;box-shadow:1px 1px 0 #fff"></div>
<div class="a" style="left:498px;top:596px;width:16px;height:17px;background:#d6d3ce;box-shadow:inset -1px -1px #404040, inset 1px 1px #fff, inset -2px -2px #808080"></div>
<svg class="a" style="left:502px;top:603px" width="7" height="4" shape-rendering="crispEdges"><path d="M0 0h7v1h-7zM1 1h5v1h-5zM2 2h3v1h-3zM3 3h1v1h-1z" fill="#333"/></svg>
<div class="t" style="left:239.0px;top:623px;font-size:12px;line-height:12px;color:#6c6e84;letter-spacing:0.62px;">Tax Code</div>
<div class="a" style="left:360px;top:618px;width:155px;height:19px;background:#fff;border:1px solid #7f7f7f;box-shadow:1px 1px 0 #fff"></div>
<div class="a" style="left:498px;top:619px;width:16px;height:17px;background:#d6d3ce;box-shadow:inset -1px -1px #404040, inset 1px 1px #fff, inset -2px -2px #808080"></div>
<svg class="a" style="left:502px;top:626px" width="7" height="4" shape-rendering="crispEdges"><path d="M0 0h7v1h-7zM1 1h5v1h-5zM2 2h3v1h-3zM3 3h1v1h-1z" fill="#333"/></svg>
<div class="t" style="left:367.5px;top:623px;font-size:12px;line-height:12px;color:#000;letter-spacing:-0.83px;">GST</div>
<div class="t" style="left:397.5px;top:623px;font-size:12px;line-height:12px;color:#000;">|</div>
<div class="t" style="left:406.5px;top:623px;font-size:12px;line-height:12px;color:#000;letter-spacing:-0.83px;">GST</div>
<div class="t" style="left:434.5px;top:623px;font-size:12px;line-height:12px;color:#000;">-</div>
<div class="t" style="left:443.5px;top:623px;font-size:12px;line-height:12px;color:#000;letter-spacing:-0.84px;">10</div>
<div class="a" style="left:516px;top:618px;width:47px;height:19px;background:#fff;border:1px solid #7f7f7f;box-shadow:1px 1px 0 #fff"></div>
<div class="t" style="left:525.0px;top:623px;font-size:12px;line-height:12px;color:#000;letter-spacing:0.75px;">20.00</div>
<div class="t" style="left:565.0px;top:623px;font-size:12px;line-height:12px;color:#6c6e84;">%</div>
<div class="t" style="left:11.0px;top:651px;font-size:12px;line-height:12px;color:#6c6e84;letter-spacing:-0.09px;">Notes</div>
<div class="a" style="left:110px;top:646px;width:535px;height:128px;background:#fff;border:1px solid #7f7f7f;box-shadow:1px 1px 0 #fff"></div>
<div class="a" style="left:627px;top:648px;width:17px;height:125px;background:repeating-conic-gradient(#fff 0 25%,#d6d3ce 0 50%) 0 0/2px 2px"></div>
<div class="a" style="left:627px;top:648px;width:17px;height:16px;background:#d6d3ce;box-shadow:inset -1px -1px #404040, inset 1px 1px #fff, inset -2px -2px #808080"></div>
<svg class="a" style="left:631px;top:654px" width="7" height="4" shape-rendering="crispEdges"><path d="M3 0h1v1h-1zM2 1h3v1h-3zM1 2h5v1h-5zM0 3h7v1h-7z" fill="#222"/></svg>
<div class="a" style="left:627px;top:756px;width:17px;height:17px;background:#d6d3ce;box-shadow:inset -1px -1px #404040, inset 1px 1px #fff, inset -2px -2px #808080"></div>
<svg class="a" style="left:631px;top:762px" width="7" height="4" shape-rendering="crispEdges"><path d="M0 0h7v1h-7zM1 1h5v1h-5zM2 2h3v1h-3zM3 3h1v1h-1z" fill="#222"/></svg>
<div class="t" style="left:756.5px;top:437px;font-size:12px;line-height:12px;color:#6c6e84;letter-spacing:0.37px;">Stage Name</div>
<div class="a" style="left:860px;top:432px;width:135px;height:19px;background:#fff;border:1px solid #7f7f7f;box-shadow:1px 1px 0 #fff"></div>
<div class="a" style="left:978px;top:433px;width:16px;height:17px;background:#d6d3ce;box-shadow:inset -1px -1px #404040, inset 1px 1px #fff, inset -2px -2px #808080"></div>
<svg class="a" style="left:982px;top:440px" width="7" height="4" shape-rendering="crispEdges"><path d="M0 0h7v1h-7zM1 1h5v1h-5zM2 2h3v1h-3zM3 3h1v1h-1z" fill="#333"/></svg>
<div class="t" style="left:754.5px;top:460px;font-size:12px;line-height:12px;color:#6c6e84;letter-spacing:0.50px;">Cost Centre</div>
<div class="a" style="left:860px;top:455px;width:135px;height:19px;background:#fff;border:1px solid #7f7f7f;box-shadow:1px 1px 0 #fff"></div>
<div class="a" style="left:978px;top:456px;width:16px;height:17px;background:#d6d3ce;box-shadow:inset -1px -1px #404040, inset 1px 1px #fff, inset -2px -2px #808080"></div>
<svg class="a" style="left:982px;top:463px" width="7" height="4" shape-rendering="crispEdges"><path d="M0 0h7v1h-7zM1 1h5v1h-5zM2 2h3v1h-3zM3 3h1v1h-1z" fill="#333"/></svg>
<div class="t" style="left:754.5px;top:483px;font-size:12px;line-height:12px;color:#6c6e84;letter-spacing:0.52px;">Unit of Measure</div>
<div class="a" style="left:860px;top:478px;width:135px;height:19px;background:#fff;border:1px solid #7f7f7f;box-shadow:1px 1px 0 #fff"></div>
<div class="a" style="left:978px;top:479px;width:16px;height:17px;background:#d6d3ce;box-shadow:inset -1px -1px #404040, inset 1px 1px #fff, inset -2px -2px #808080"></div>
<svg class="a" style="left:982px;top:486px" width="7" height="4" shape-rendering="crispEdges"><path d="M0 0h7v1h-7zM1 1h5v1h-5zM2 2h3v1h-3zM3 3h1v1h-1z" fill="#333"/></svg>
<div class="t" style="left:754.5px;top:506px;font-size:12px;line-height:12px;color:#6c6e84;letter-spacing:0.09px;">Employee</div>
<div class="a" style="left:860px;top:501px;width:135px;height:19px;background:#fff;border:1px solid #7f7f7f;box-shadow:1px 1px 0 #fff"></div>
<div class="a" style="left:978px;top:502px;width:16px;height:17px;background:#d6d3ce;box-shadow:inset -1px -1px #404040, inset 1px 1px #fff, inset -2px -2px #808080"></div>
<svg class="a" style="left:982px;top:509px" width="7" height="4" shape-rendering="crispEdges"><path d="M0 0h7v1h-7zM1 1h5v1h-5zM2 2h3v1h-3zM3 3h1v1h-1z" fill="#333"/></svg>
<div class="t" style="left:754.5px;top:529px;font-size:12px;line-height:12px;color:#6c6e84;letter-spacing:0.82px;">Warranty</div>
<div class="a" style="left:860px;top:524px;width:135px;height:19px;background:#fff;border:1px solid #7f7f7f;box-shadow:1px 1px 0 #fff"></div>
<div class="a" style="left:760px;top:551px;width:13px;height:13px;background:#fff;box-shadow:inset -1px -1px #fff, inset 1px 1px #808080, inset -2px -2px #d6d3ce, inset 2px 2px #404040"></div>
<div class="t" style="left:778.0px;top:552px;font-size:12px;line-height:12px;color:#000;letter-spacing:0.45px;">Do Not Print On Invoice</div>
<div class="t" style="left:756.5px;top:641px;font-size:12px;line-height:12px;color:#6c6e84;letter-spacing:0.66px;">Effective Markup</div>
<div class="a" style="left:785px;top:660px;width:89px;height:19px;background:#d6d3ce;border:1px solid #7f7f7f;box-shadow:1px 1px 0 #fff, inset 1px 1px 0 #fff"></div>
<div class="t" style="left:844.0px;top:665px;font-size:12px;line-height:12px;color:#000;letter-spacing:0.55px;">3.00</div>
<div class="t" style="left:876.0px;top:665px;font-size:12px;line-height:12px;color:#6c6e84;">%</div>
<div class="a" style="left:899px;top:660px;width:91px;height:19px;background:#d6d3ce;border:1px solid #7f7f7f;box-shadow:1px 1px 0 #fff, inset 1px 1px 0 #fff"></div>
<div class="t" style="left:954.0px;top:665px;font-size:12px;line-height:12px;color:#000;letter-spacing:0.25px;">$0.15</div>
<div class="t" style="left:756.5px;top:690px;font-size:12px;line-height:12px;color:#6c6e84;letter-spacing:0.45px;">Parts Used Totals</div>
<div class="t" style="left:759.0px;top:714px;font-size:12px;line-height:12px;color:#6c6e84;letter-spacing:0.87px;">Total (Ex. Tax)</div>
<div class="a" style="left:894px;top:709px;width:99px;height:19px;background:#d6d3ce;border:1px solid #7f7f7f;box-shadow:1px 1px 0 #fff, inset 1px 1px 0 #fff"></div>
<div class="t" style="left:956.0px;top:714px;font-size:12px;line-height:12px;color:#000;letter-spacing:0.50px;">$5.15</div>
<div class="t" style="left:759.0px;top:737px;font-size:12px;line-height:12px;color:#6c6e84;letter-spacing:0.99px;">Total Tax Amount</div>
<div class="a" style="left:894px;top:732px;width:99px;height:19px;background:#d6d3ce;border:1px solid #7f7f7f;box-shadow:1px 1px 0 #fff, inset 1px 1px 0 #fff"></div>
<div class="t" style="left:956.0px;top:737px;font-size:12px;line-height:12px;color:#000;letter-spacing:0.50px;">$1.03</div>
<div class="t" style="left:759.0px;top:760px;font-size:12px;line-height:12px;color:#6c6e84;letter-spacing:0.81px;">Total (Inc. Tax)</div>
<div class="a" style="left:894px;top:755px;width:99px;height:19px;background:#d6d3ce;border:1px solid #7f7f7f;box-shadow:1px 1px 0 #fff, inset 1px 1px 0 #fff"></div>
<div class="t" style="left:956.0px;top:760px;font-size:12px;line-height:12px;color:#000;letter-spacing:0.50px;">$6.18</div>
</body></html>
